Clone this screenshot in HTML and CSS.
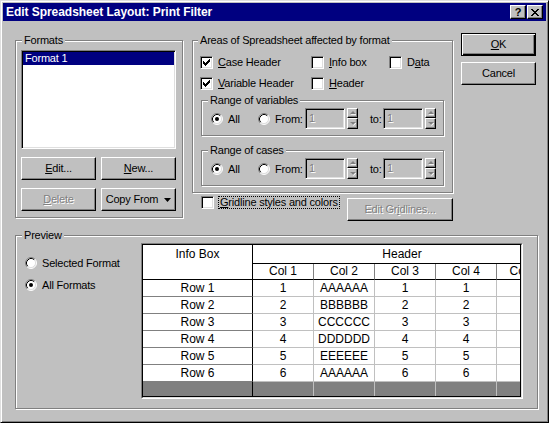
FILE: index.html
```html
<!DOCTYPE html>
<html>
<head>
<meta charset="utf-8">
<link rel="stylesheet" href="styles.css">
</head>
<body>
<svg class="defs" width="0" height="0">
  <symbol id="radio" viewBox="0 0 12 12">
    <circle cx="6" cy="6" r="5" fill="#fff"/>
    <path d="M2.11 9.89A5.5 5.5 0 0 1 9.89 2.11" stroke="#808080" fill="none"/>
    <path d="M9.89 2.11A5.5 5.5 0 0 1 2.11 9.89" stroke="#fff" fill="none"/>
    <path d="M2.82 9.18A4.5 4.5 0 0 1 9.18 2.82" stroke="#000" fill="none"/>
    <path d="M9.18 2.82A4.5 4.5 0 0 1 2.82 9.18" stroke="#dfdfdf" fill="none"/>
  </symbol>
  <symbol id="radioon" viewBox="0 0 12 12">
    <use href="#radio"/>
    <circle cx="6" cy="6" r="2" fill="#000"/>
  </symbol>
  <symbol id="check" viewBox="0 0 11 11">
    <path d="M2 4h1v3H2zM3 5h1v3H3zM4 6h1v3H4zM5 5h1v3H5zM6 4h1v3H6zM7 3h1v3H7zM8 2h1v3H8z" fill="#000"/>
  </symbol>
  <symbol id="up" viewBox="0 0 6 4">
    <path d="M3 0L6 3H0z" fill="#fff" transform="translate(0.6 0.8)"/>
    <path d="M3 0L6 3H0z" fill="#808080"/>
  </symbol>
  <symbol id="down" viewBox="0 0 6 4">
    <path d="M0 0h6L3 3z" fill="#fff" transform="translate(0.6 0.8)"/>
    <path d="M0 0h6L3 3z" fill="#808080"/>
  </symbol>
</svg>
<div class="window">
  <div class="titlebar">
    <span class="title">Edit Spreadsheet Layout: Print Filter</span>
    <span class="tb-btns">
      <span class="tb-btn">?</span>
      <span class="tb-btn"><svg width="8" height="7" viewBox="0 0 8 7" shape-rendering="crispEdges"><path d="M0 0h2v1H0zM6 0h2v1H6zM1 1h2v1H1zM5 1h2v1H5zM2 2h4v1H2zM3 3h2v1H3zM2 4h4v1H2zM1 5h2v1H1zM5 5h2v1H5zM0 6h2v1H0zM6 6h2v1H6z" fill="#000"/></svg></span>
    </span>
  </div>
  <div class="content">
    <div class="top">
      <div class="group formats">
        <div class="gtitle">Formats</div>
        <div class="listbox"><div class="item sel">Format 1</div></div>
        <div class="btnrow">
          <div class="btn"><span><u>E</u>dit...</span></div>
          <div class="btn"><span><u>N</u>ew...</span></div>
        </div>
        <div class="btnrow">
          <div class="btn disabled"><span><u>D</u>elete</span></div>
          <div class="btn"><span>Copy From</span><svg class="dd" width="7" height="4" viewBox="0 0 7 4"><path d="M0 0h7L3.5 4z" fill="#000"/></svg></div>
        </div>
      </div>
      <div class="colB">
        <div class="group areas">
          <div class="gtitle">Areas of Spreadsheet affected by format</div>
          <div class="checks">
            <div class="chk"><span class="cbox"><svg width="11" height="11"><use href="#check"/></svg></span><span class="lbl"><u>C</u>ase Header</span></div>
            <div class="chk"><span class="cbox"></span><span class="lbl"><u>I</u>nfo box</span></div>
            <div class="chk"><span class="cbox"></span><span class="lbl">D<u>a</u>ta</span></div>
            <div class="chk"><span class="cbox"><svg width="11" height="11"><use href="#check"/></svg></span><span class="lbl"><u>V</u>ariable Header</span></div>
            <div class="chk"><span class="cbox"></span><span class="lbl"><u>H</u>eader</span></div>
          </div>
          <div class="group range vars">
            <div class="gtitle">Range of variables</div>
            <div class="rrow">
              <div class="ropt all"><svg class="rb" width="12" height="12"><use href="#radioon"/></svg><span>All</span></div>
              <div class="ropt from"><svg class="rb" width="12" height="12"><use href="#radio"/></svg><span>From:</span></div>
              <div class="field">1</div>
              <div class="spin"><div class="sp"><svg width="6" height="4"><use href="#up"/></svg></div><div class="sp"><svg width="6" height="4"><use href="#down"/></svg></div></div>
              <div class="to">to:</div>
              <div class="field">1</div>
              <div class="spin"><div class="sp"><svg width="6" height="4"><use href="#up"/></svg></div><div class="sp"><svg width="6" height="4"><use href="#down"/></svg></div></div>
            </div>
          </div>
          <div class="group range cases">
            <div class="gtitle">Range of cases</div>
            <div class="rrow">
              <div class="ropt all"><svg class="rb" width="12" height="12"><use href="#radioon"/></svg><span>All</span></div>
              <div class="ropt from"><svg class="rb" width="12" height="12"><use href="#radio"/></svg><span>From:</span></div>
              <div class="field">1</div>
              <div class="spin"><div class="sp"><svg width="6" height="4"><use href="#up"/></svg></div><div class="sp"><svg width="6" height="4"><use href="#down"/></svg></div></div>
              <div class="to">to:</div>
              <div class="field">1</div>
              <div class="spin"><div class="sp"><svg width="6" height="4"><use href="#up"/></svg></div><div class="sp"><svg width="6" height="4"><use href="#down"/></svg></div></div>
            </div>
          </div>
        </div>
        <div class="gridrow">
          <div class="gridchk"><span class="cbox"></span><span class="focus"><u>G</u>ridline styles and colors</span></div>
          <div class="btn disabled gbtn"><span>Edit Gr<u>i</u>dlines...</span></div>
        </div>
      </div>
      <div class="colC">
        <div class="btn default"><span><u>O</u>K</span></div>
        <div class="btn"><span>Cancel</span></div>
      </div>
    </div>
    <div class="group preview">
      <div class="gtitle">Preview</div>
      <div class="pbody">
        <div class="radios">
          <div class="ropt"><svg class="rb" width="12" height="12"><use href="#radio"/></svg><span>Selected Format</span></div>
          <div class="ropt"><svg class="rb" width="12" height="12"><use href="#radioon"/></svg><span>All Formats</span></div>
        </div>
        <div class="tframe">
          <div class="tinner">
            <div class="gview">
              <div class="grid">
                <div class="c info">Info Box</div>
                <div class="c hdr">Header</div>
                <div class="c colh">Col 1</div><div class="c colh">Col 2</div><div class="c colh">Col 3</div><div class="c colh">Col 4</div><div class="c colh">Col 5</div>
                <div class="c rowl">Row 1</div><div class="c">1</div><div class="c">AAAAAA</div><div class="c">1</div><div class="c">1</div><div class="c"></div>
                <div class="c rowl">Row 2</div><div class="c">2</div><div class="c">BBBBBB</div><div class="c">2</div><div class="c">2</div><div class="c"></div>
                <div class="c rowl">Row 3</div><div class="c">3</div><div class="c">CCCCCC</div><div class="c">3</div><div class="c">3</div><div class="c"></div>
                <div class="c rowl">Row 4</div><div class="c">4</div><div class="c">DDDDDD</div><div class="c">4</div><div class="c">4</div><div class="c"></div>
                <div class="c rowl">Row 5</div><div class="c">5</div><div class="c">EEEEEE</div><div class="c">5</div><div class="c">5</div><div class="c"></div>
                <div class="c rowl">Row 6</div><div class="c">6</div><div class="c">AAAAAA</div><div class="c">6</div><div class="c">6</div><div class="c"></div>
                <div class="c rowl gray"></div><div class="c gray"></div><div class="c gray"></div><div class="c gray"></div><div class="c gray"></div><div class="c gray"></div>
              </div>
            </div>
          </div>
        </div>
      </div>
    </div>
  </div>
</div>
</body>
</html>
```
FILE: styles.css
```css
* { box-sizing: border-box; }
body {
  margin: 0;
  font-family: "Liberation Sans", Arial, sans-serif;
  font-size: 11px;
  letter-spacing: -0.2px;
  color: #000;
}
.defs { position: absolute; width: 0; height: 0; }
u { text-decoration: underline; text-underline-offset: 1px; }

.window {
  width: 549px;
  height: 423px;
  background: #c0c0c0;
  border: 1px solid;
  border-color: #dfdfdf #000 #000 #dfdfdf;
  box-shadow: inset 1px 1px #fff, inset -1px -1px #808080;
  padding: 2px;
}
.titlebar {
  height: 18px;
  background: #000080;
  color: #fff;
  display: flex;
  align-items: center;
  justify-content: space-between;
  padding: 0 3px 0 3px;
}
.title { font-weight: bold; font-size: 12px; line-height: 18px; letter-spacing: -0.05px; }
.tb-btns { display: flex; gap: 1px; }
.tb-btn {
  width: 16px;
  height: 14px;
  background: #c0c0c0;
  border: 1px solid;
  border-color: #fff #000 #000 #fff;
  box-shadow: inset -1px -1px #808080;
  color: #000;
  display: flex;
  align-items: center;
  justify-content: center;
  font-weight: bold;
  font-size: 11px;
  line-height: 12px;
  letter-spacing: 0;
}

.content { padding: 12px 0 0 12px; }
.top { display: flex; align-items: flex-start; }

.group {
  border: 1px solid #808080;
  box-shadow: inset 1px 1px #fff, 1px 1px #fff;
}
.gtitle {
  margin-top: -7px;
  height: 13px;
  line-height: 13px;
  padding: 0 2px;
  background: #c0c0c0;
  width: max-content;
}

.formats { width: 168px; height: 178px; margin-top: 7px; padding-left: 5px; }
.formats .gtitle { margin-left: 1px; }
.listbox {
  margin-top: 3px;
  width: 155px;
  height: 99px;
  background: #fff;
  border: 1px solid;
  border-color: #808080 #fff #fff #808080;
  box-shadow: inset 1px 1px #000, inset -1px -1px #dfdfdf;
  padding: 1px;
}
.item { height: 13px; line-height: 13px; padding-left: 2px; }
.item.sel { background: #000080; color: #fff; }

.btnrow { display: flex; gap: 5px; margin-top: 8px; }
.btn {
  width: 75px;
  height: 23px;
  background: #c0c0c0;
  border: 1px solid;
  border-color: #fff #000 #000 #fff;
  box-shadow: inset -1px -1px #808080;
  display: flex;
  align-items: center;
  justify-content: center;
  line-height: 13px;
}
.btn.default {
  border-color: #000;
  box-shadow: inset 1px 1px #fff, inset -1px -1px #000, inset -2px -2px #808080;
}
.btn.disabled { color: #808080; text-shadow: 1px 1px #fff; }
.dd { margin-left: 6px; }

.colB { margin-left: 9px; width: 261px; }
.areas { height: 153px; margin-top: 7px; padding-left: 5px; }
.checks {
  display: grid;
  grid-template-columns: 111px 78px auto;
  row-gap: 8px;
  margin: 9px 0 0 2px;
}
.chk { display: flex; align-items: flex-start; height: 13px; }
.cbox {
  width: 13px;
  height: 13px;
  flex: none;
  background: #fff;
  border: 1px solid;
  border-color: #808080 #fff #fff #808080;
  box-shadow: inset 1px 1px #000, inset -1px -1px #dfdfdf;
}
.cbox svg { display: block; }
.lbl { margin-left: 5px; line-height: 12px; }

.range { width: 243px; height: 36px; margin-left: 3px; }
.range.vars { margin-top: 10px; }
.range.cases { margin-top: 14px; }
.range .gtitle { margin-left: 6px; }
.rrow {
  display: flex;
  align-items: center;
  margin-top: 1px;
  padding-left: 9px;
  height: 21px;
}
.ropt { display: flex; align-items: center; }
.rb { flex: none; margin-right: 5px; display: block; }
.ropt.all, .ropt.from { width: 47px; }
.field {
  width: 40px;
  height: 21px;
  border: 1px solid;
  border-color: #808080 #fff #fff #808080;
  box-shadow: inset 1px 1px #000, inset -1px -1px #dfdfdf;
  padding: 3px 0 0 3px;
  color: #808080;
  text-shadow: 1px 1px #fff;
  line-height: 13px;
}
.spin { margin-left: 2px; width: 11px; height: 21px; display: flex; flex-direction: column; }
.sp {
  height: 10px;
  background: #c0c0c0;
  border: 1px solid;
  border-color: #fff #000 #000 #fff;
  box-shadow: inset -1px -1px #808080;
  display: flex;
  align-items: center;
  justify-content: center;
}
.sp + .sp { height: 11px; }
.sp svg { display: block; }
.to { margin-left: 12px; width: 13px; }

.gridrow { display: flex; align-items: flex-start; margin-top: 3px; }
.gridchk { width: 146px; margin-left: 9px; display: flex; align-items: flex-start; }
.focus {
  margin-left: 4px;
  height: 13px;
  line-height: 11px;
  padding: 0 1px;
  border: 1px dotted #000;
}
.gbtn { width: 106px; margin-top: 2px; }

.colC { margin-left: 8px; display: flex; flex-direction: column; gap: 6px; }

.preview { margin-top: 14px; width: 523px; height: 174px; }
.preview .gtitle { margin-left: 6px; }
.pbody { display: flex; }
.radios {
  width: 125px;
  padding: 14px 0 0 9px;
  display: flex;
  flex-direction: column;
  gap: 9px;
}
.radios .ropt { height: 13px; }

.tframe {
  margin-top: 1px;
  border: 1px solid;
  border-color: #808080 #fff #fff #808080;
}
.tinner {
  border: 1px solid;
  border-color: #000 #dfdfdf #dfdfdf #000;
}
.gview {
  width: 378px;
  overflow: hidden;
  border-right: 1px solid #000;
  border-bottom: 1px solid #000;
}
.grid {
  display: grid;
  grid-template-columns: 110px 61px 61px 61px 61px 54px;
  grid-template-rows: 19px 16px repeat(6, 17px) 14px;
  width: 407px;
  font-size: 12px;
  letter-spacing: 0;
}
.c {
  background: #fff;
  border-right: 1px solid #c0c0c0;
  border-bottom: 1px solid #c0c0c0;
  text-align: center;
  line-height: 16px;
  white-space: nowrap;
}
.info {
  grid-row: 1 / 3;
  border-right-color: #000;
  border-bottom-color: #000;
  line-height: 18px;
}
.hdr {
  grid-column: 2 / 7;
  border-right: none;
  border-bottom-color: #000;
  line-height: 18px;
}
.colh { border-right-color: #808080; border-bottom-color: #000; line-height: 15px; }
.rowl { border-right-color: #000; border-bottom-color: #808080; }
.gray { background: #808080; border-bottom: none; }
.rowl.gray { border-right-color: #000; }
```
